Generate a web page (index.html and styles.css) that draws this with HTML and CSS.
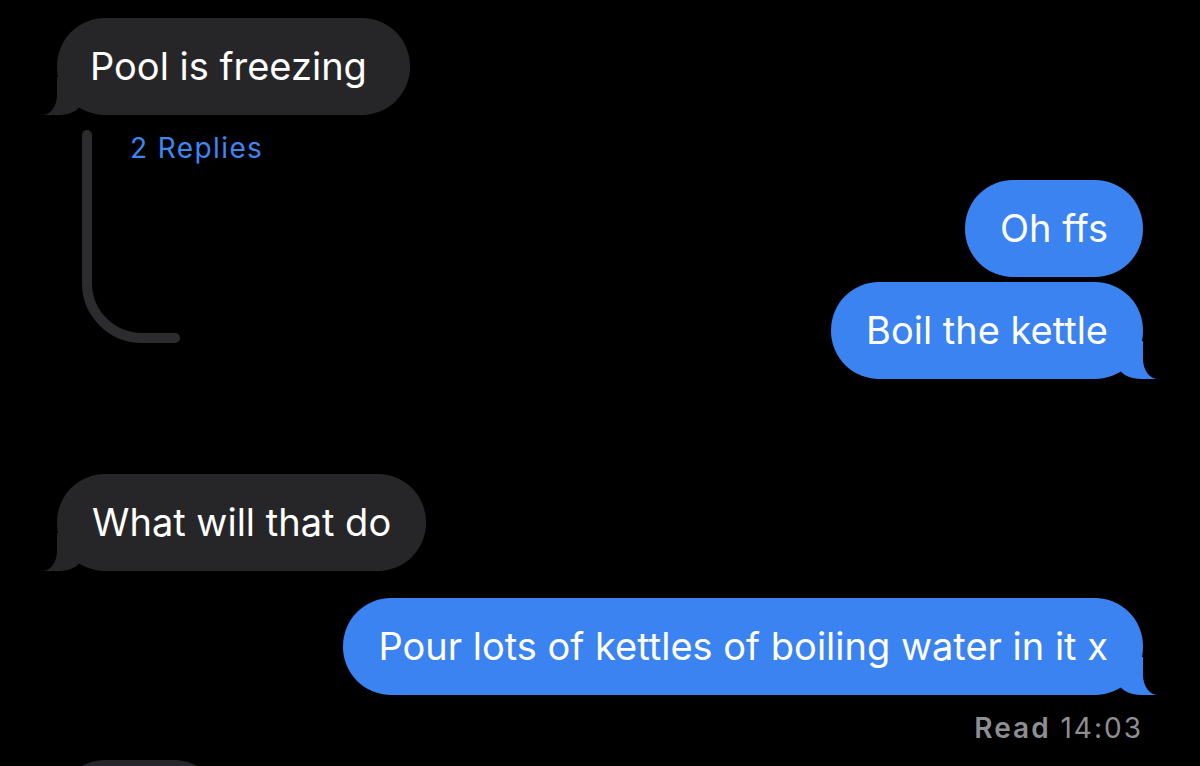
FILE: index.html
```html
<!DOCTYPE html>
<html lang="en">
<head>
<meta charset="utf-8">
<title>Messages</title>
<link rel="stylesheet" href="styles.css">
</head>
<body>
<main class="chat">
  <div class="bubble them tail wide-end">Pool is freezing</div>

  <div class="thread-row">
    <div class="thread">
      <svg class="thread-line" width="110" height="225" viewBox="0 0 110 225">
        <path d="M5 10 V158 A55 55 0 0 0 60 213 H93" fill="none" stroke="#2c2c2e" stroke-width="10" stroke-linecap="round"/>
      </svg>
      <span class="replies">2 Replies</span>
    </div>
    <div class="group me-group">
      <div class="bubble me">Oh ffs</div>
      <div class="bubble me tail">Boil the kettle</div>
    </div>
  </div>

  <div class="bubble them tail gap-lg">What will that do</div>

  <div class="bubble me tail gap-md">Pour lots of kettles of boiling water in it x</div>

  <div class="receipt"><b>Read</b> 14:03</div>

  <div class="bubble them partial">&nbsp;</div>
</main>
</body>
</html>
```

FILE: styles.css
```css
* { box-sizing: border-box; }

html, body {
  margin: 0;
  height: 766px;
  overflow: hidden;
  background: #000;
}

body {
  font-family: "Inter", "Noto Sans", "Liberation Sans", sans-serif;
  color: #fff;
}

.chat {
  display: flex;
  flex-direction: column;
  padding: 18px 57px 0 57px;
}

.bubble {
  position: relative;
  display: inline-block;
  padding: 26px 35px;
  font-size: 38px;
  line-height: 45px;
  border-radius: 48px;
  white-space: nowrap;
}

.them {
  align-self: flex-start;
  background: #262628;
}

.me {
  align-self: flex-end;
  background: #3b83f1;
}

.wide-end { padding-left: 33px; padding-right: 43px; }

/* tails */
.them.tail::before,
.them.tail::after,
.me.tail::before,
.me.tail::after {
  content: "";
  position: absolute;
  bottom: 0;
}

.them.tail::before {
  left: -15px;
  width: 40px;
  height: 38px;
  background: #262628;
  border-bottom-right-radius: 24px 14px;
}
.them.tail::after {
  left: -40px;
  width: 40px;
  height: 40px;
  background: #000;
  border-bottom-right-radius: 15px 20px;
}

.me.tail::before {
  right: -15px;
  width: 40px;
  height: 38px;
  background: #3b83f1;
  border-bottom-left-radius: 24px 14px;
}
.me.tail::after {
  right: -40px;
  width: 40px;
  height: 40px;
  background: #000;
  border-bottom-left-radius: 15px 20px;
}

.thread-row {
  display: flex;
  justify-content: space-between;
  align-items: flex-start;
  margin-top: 10px;
}

.thread {
  display: grid;
}
.thread > * { grid-area: 1 / 1; }

.thread-line {
  display: block;
  margin-left: 25px;
}

.replies {
  margin: 8px 0 0 73px;
  font-size: 28px;
  letter-spacing: 1.4px;
  line-height: 31px;
  color: #3e87f2;
  align-self: start;
}

.me-group {
  display: flex;
  flex-direction: column;
  align-items: flex-end;
  gap: 5px;
  padding-top: 55px;
}

.gap-lg { margin-top: 95px; }
.gap-md { margin-top: 27px; }

.receipt {
  align-self: flex-end;
  margin-top: 18px;
  margin-right: 0;
  font-size: 28px;
  letter-spacing: 2px;
  line-height: 31px;
  color: #8e8e93;
}
.receipt b { font-weight: 600; }

.partial {
  margin-top: 16px;
  width: 165px;
  padding-left: 0;
  padding-right: 0;
}
```
